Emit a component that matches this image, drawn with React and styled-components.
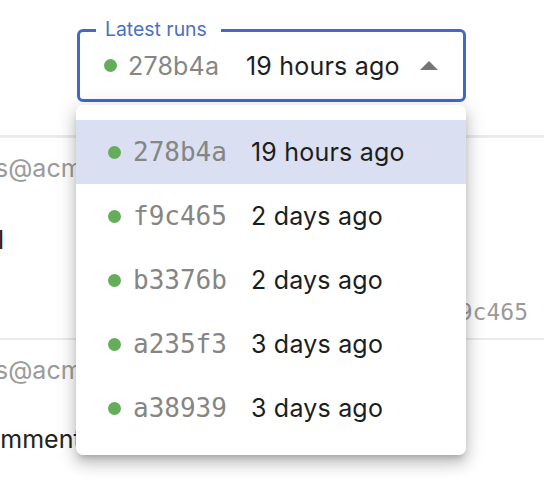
import React from "react";
import styled, { createGlobalStyle } from "styled-components";

const GlobalStyle = createGlobalStyle`
  html, body { margin: 0; padding: 0; background: #ffffff; }
  body { font-family: Inter, "Noto Sans", "DejaVu Sans", sans-serif; }
`;

const Page = styled.div`
  position: relative;
  width: 544px;
  height: 496px;
  overflow: hidden;
  background: #fff;
`;

const Header = styled.div`
  height: 135px;
  box-sizing: border-box;
  padding: 29px 0 0 77px;
`;

const Field = styled.div`
  position: relative;
  box-sizing: border-box;
  width: 389px;
  height: 73px;
  border: 3px solid #4369c4;
  border-radius: 6px;
  display: flex;
  align-items: center;
  padding: 0 25px 0 24px;
`;

const Legend = styled.span`
  position: absolute;
  top: -14px;
  left: 16px;
  padding: 0 14px 0 9px;
  background: #fff;
  color: #4a6fc6;
  font-size: 19.4px;
  line-height: 22px;
`;

const Dot = styled.span`
  flex: none;
  width: 13px;
  height: 13px;
  border-radius: 50%;
  background: #66ad5b;
`;

const Hash = styled.span`
  color: #858585;
  font-size: ${(p) => (p.$mono ? "26px" : "25px")};
  letter-spacing: ${(p) => (p.$mono ? "0" : "0.2px")};
  font-family: ${(p) =>
    p.$mono ? '"DejaVu Sans Mono", "Liberation Mono", monospace' : "inherit"};
  margin-left: ${(p) => (p.$mono ? "12px" : "11px")};
  width: 118px;
  flex: none;
  white-space: nowrap;
`;

const When = styled.span`
  color: #1d1d1d;
  font-size: 25px;
  letter-spacing: 0.2px;
  white-space: nowrap;
  flex: 1;
`;

const Arrow = styled.svg`
  flex: none;
  width: 18px;
  height: 9px;
  margin-top: -1px;
`;

const Divider = styled.div`
  height: ${(p) => p.$h || 2}px;
  background: #ebebeb;
`;

const Row = styled.div`
  height: ${(p) => p.$h}px;
  display: flex;
  justify-content: space-between;
  overflow: hidden;
`;

const LeftCol = styled.div`
  display: flex;
  flex-direction: column;
  align-items: flex-start;
  padding-top: ${(p) => p.$pt}px;
  gap: ${(p) => p.$gap}px;
`;

const Email = styled.div`
  color: #9a9a9a;
  font-size: 25px;
  line-height: 28px;
  white-space: nowrap;
  margin-left: ${(p) => p.$shift}px;
`;

const Title = styled.div`
  color: #222222;
  font-size: 25px;
  line-height: 28px;
  white-space: nowrap;
  margin-left: ${(p) => p.$shift}px;
`;

const RightHash = styled.div`
  align-self: flex-end;
  margin-bottom: 12px;
  margin-right: 16px;
  color: #9a9a9a;
  font-family: "DejaVu Sans Mono", "Liberation Mono", monospace;
  font-size: 23px;
  line-height: 28px;
`;

const Menu = styled.ul`
  position: absolute;
  top: 105px;
  left: 76px;
  width: 390px;
  margin: 0;
  padding: 15px 0;
  list-style: none;
  box-sizing: border-box;
  background: #fff;
  border-radius: 7px;
  box-shadow: 0px 5px 6px -3px rgba(0, 0, 0, 0.2),
    0px 9px 14px 1px rgba(0, 0, 0, 0.14), 0px 3px 20px 3px rgba(0, 0, 0, 0.12);
`;

const Item = styled.li`
  height: 64px;
  display: flex;
  align-items: center;
  padding-left: 32px;
  background: ${(p) => (p.$selected ? "#dae0f2" : "transparent")};
`;

const runs = [
  { hash: "278b4a", when: "19 hours ago" },
  { hash: "f9c465", when: "2 days ago" },
  { hash: "b3376b", when: "2 days ago" },
  { hash: "a235f3", when: "3 days ago" },
  { hash: "a38939", when: "3 days ago" },
];

export default function App() {
  return (
    <Page>
      <GlobalStyle />
      <Header>
        <Field>
          <Legend>Latest runs</Legend>
          <Dot />
          <Hash>278b4a</Hash>
          <When>19 hours ago</When>
          <Arrow viewBox="0 0 18 9">
            <path d="M0 9 L9 0 L18 9 Z" fill="#757575" />
          </Arrow>
        </Field>
      </Header>
      <Divider $h={3} />
      <Row $h={200}>
        <LeftCol $pt={16} $gap={44}>
          <Email $shift={-5}>s@acme.io</Email>
          <Title $shift={-2}>l</Title>
        </LeftCol>
        <RightHash>f9c465</RightHash>
      </Row>
      <Divider $h={2} />
      <Row $h={160}>
        <LeftCol $pt={16} $gap={41}>
          <Email $shift={-5}>s@acme.io</Email>
          <Title $shift={-33}>Comment</Title>
        </LeftCol>
      </Row>
      <Menu>
        {runs.map((r, i) => (
          <Item key={r.hash} $selected={i === 0}>
            <Dot />
            <Hash $mono>{r.hash}</Hash>
            <When>{r.when}</When>
          </Item>
        ))}
      </Menu>
    </Page>
  );
}
